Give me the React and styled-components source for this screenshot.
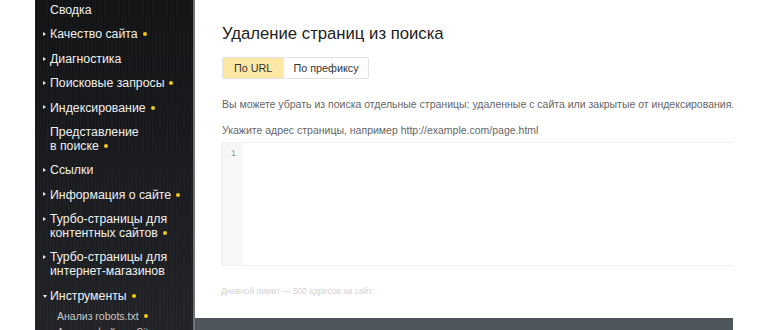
import styled, { createGlobalStyle } from "styled-components";

const GlobalStyle = createGlobalStyle`
  html, body {
    margin: 0;
    padding: 0;
    background: #ffffff;
    overflow: hidden;
    font-family: "Liberation Sans", Arial, sans-serif;
  }
`;

const Page = styled.div`
  display: flex;
  width: 770px;
  height: 330px;
  overflow: hidden;
  padding-left: 35px;
  box-sizing: border-box;
`;

const Sidebar = styled.nav`
  flex: 0 0 160px;
  height: 330px;
  box-sizing: border-box;
  padding: 0 4px 0 8px;
  background:
    repeating-linear-gradient(90deg, rgba(255, 255, 255, 0.025) 0 1px, transparent 1px 3px),
    linear-gradient(180deg, #121315 0%, #1b1c1f 60%, #222326 100%);
  border-right: 2px solid #6f7175;
  overflow: hidden;
`;

const MenuList = styled.ul`
  list-style: none;
  margin: -2.2px 0 0;
  padding: 0;
`;

const MenuItem = styled.li`
  position: relative;
  padding: 5.2px 0 5.2px 7px;
  font-size: 12.3px;
  line-height: 14px;
  color: #f0f0f0;
  white-space: nowrap;
`;

const SubItem = styled.li`
  padding: 2px 0 1.5px 14px;
  font-size: 10.5px;
  line-height: 13px;
  color: #c8c8c8;
  white-space: nowrap;
`;

const Arrow = styled.span`
  position: absolute;
  left: 0;
  top: ${(p) => (p.$open ? "11px" : "10px")};
  width: 0;
  height: 0;
  border-style: solid;
  ${(p) =>
    p.$open
      ? "border-width: 3px 2.5px 0 2.5px; border-color: #e8e8e8 transparent transparent transparent;"
      : "border-width: 2.5px 0 2.5px 3px; border-color: transparent transparent transparent #e8e8e8;"}
`;

const Dot = styled.span`
  display: inline-block;
  width: 4px;
  height: 4px;
  border-radius: 50%;
  background: #f3c614;
  margin-left: 5px;
  vertical-align: 2px;
`;

const Main = styled.main`
  flex: 0 0 538px;
  height: 330px;
  display: flex;
  flex-direction: column;
  background: #ffffff;
  overflow: hidden;
`;

const Content = styled.div`
  flex: 1;
  padding: 23px 0 0 27px;
`;

const Title = styled.h1`
  margin: 0;
  font-size: 16.7px;
  line-height: 22px;
  font-weight: 400;
  color: #222222;
`;

const Tabs = styled.div`
  display: inline-flex;
  margin-top: 12px;
  height: 22px;
  border: 1px solid #e4e4e4;
  border-radius: 2px;
  box-sizing: border-box;
  overflow: hidden;
`;

const Tab = styled.button`
  border: none;
  padding: 0 ${(p) => p.$pad}px;
  font-family: inherit;
  font-size: 10.8px;
  color: #333333;
  background: ${(p) => (p.$active ? "#fce8a6" : "#ffffff")};
  border-left: ${(p) => (p.$active ? "none" : "1px solid #ececec")};
`;

const Text = styled.p`
  margin: ${(p) => p.$mt}px 0 0;
  font-size: 10.5px;
  line-height: 14px;
  color: #666666;
  white-space: nowrap;
`;

const Editor = styled.div`
  display: flex;
  margin: 5px 0 0 -1px;
  height: 124px;
  border: 1px solid #f0f0f0;
  border-right: none;
  box-sizing: border-box;
`;

const Gutter = styled.div`
  width: 20px;
  background: #f7f7f7;
  border-right: 1px solid #f2f2f2;
  text-align: right;
  padding: 5px 5px 0 0;
  box-sizing: border-box;
  font-size: 9px;
  color: #999999;
`;

const Area = styled.div`
  flex: 1;
`;

const Limit = styled.p`
  margin: 19px 0 0 -1px;
  font-size: 8.3px;
  line-height: 12px;
  color: #d2d2d2;
`;

const BottomBar = styled.div`
  height: 12px;
  background: #4e555d;
`;

const items = [
  { label: "Сводка" },
  { label: "Качество сайта", arrow: true, dot: true },
  { label: "Диагностика", arrow: true },
  { label: "Поисковые запросы", arrow: true, dot: true },
  { label: "Индексирование", arrow: true, dot: true },
  { label: ["Представление", "в поиске"], dot: true },
  { label: "Ссылки", arrow: true },
  { label: "Информация о сайте", arrow: true, dot: true },
  { label: ["Турбо-страницы для", "контентных сайтов"], arrow: true, dot: true },
  { label: ["Турбо-страницы для", "интернет-магазинов"], arrow: true },
  { label: "Инструменты", arrow: true, open: true, dot: true },
];

function renderLabel(label, dot) {
  if (Array.isArray(label)) {
    return (
      <>
        {label[0]}
        <br />
        {label[1]}
        {dot && <Dot />}
      </>
    );
  }
  return (
    <>
      {label}
      {dot && <Dot />}
    </>
  );
}

export default function App() {
  return (
    <>
      <GlobalStyle />
      <Page>
        <Sidebar>
          <MenuList>
            {items.map((item, i) => (
              <MenuItem key={i}>
                {item.arrow && <Arrow $open={item.open} />}
                {renderLabel(item.label, item.dot)}
              </MenuItem>
            ))}
            <SubItem>
              Анализ robots.txt
              <Dot />
            </SubItem>
            <SubItem>Анализ файлов Sitemap</SubItem>
          </MenuList>
        </Sidebar>
        <Main>
          <Content>
            <Title>Удаление страниц из поиска</Title>
            <Tabs>
              <Tab $active $pad={11}>По URL</Tab>
              <Tab $pad={9}>По префиксу</Tab>
            </Tabs>
            <Text $mt={18}>
              Вы можете убрать из поиска отдельные страницы: удаленные с сайта или закрытые от индексирования.
            </Text>
            <Text $mt={12}>Укажите адрес страницы, например http://example.com/page.html</Text>
            <Editor>
              <Gutter>1</Gutter>
              <Area />
            </Editor>
            <Limit>Дневной лимит — 500 адресов на сайт.</Limit>
          </Content>
          <BottomBar />
        </Main>
      </Page>
    </>
  );
}
